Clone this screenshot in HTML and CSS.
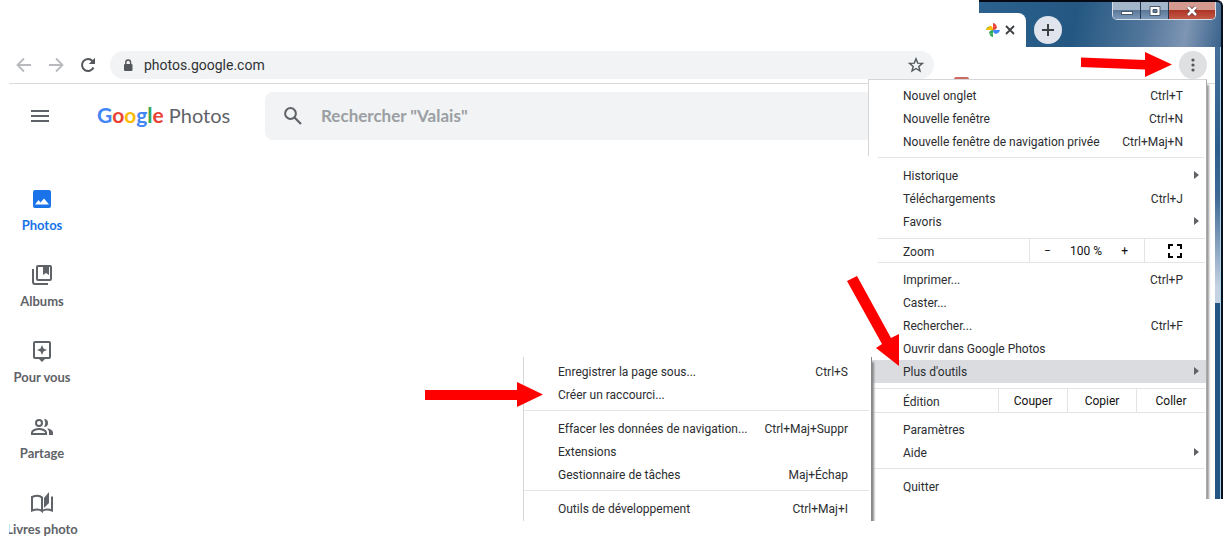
FILE: index.html
```html
<!DOCTYPE html>
<html lang="fr">
<head>
<meta charset="utf-8">
<title>Google Photos</title>
<link rel="stylesheet" href="styles.css">
</head>
<body>
<div class="window">
  <header class="titlebar">
    <div class="tab">
      <svg width="14" height="14" viewBox="0 0 14 14" aria-hidden="true"><path fill="#ea4335" d="M7 0c2.500.6 3.500 2 3.500 3.800H7z"/><path fill="#fbbc04" d="M3.500 2.800C5.500 2.800 7 4.500 7 7H3.500z"/><path fill="#34a853" d="M0 7c.6-2.500 2-3.500 3.500-3.500V7H7v7c-2.500-.6-3.500-2-3.500-3.500H7L7 7z"/><path fill="#fbbc04" d="M3.500 2.800C5.500 2.800 7 4.500 7 7H0c.6-2 1.800-3 3.500-3z"/><path fill="#ea4335" d="M11 3.500C11 5.500 9.500 7 7 7V3.500z"/><path fill="#4285f4" d="M14 7c-.6 2.500-2 3.500-3.800 3.500V7zM10.500 11C8.500 11 7 9.500 7 7h3.500z"/><path fill="#34a853" d="M3 10.500C3 8.500 4.500 7 7 7v3.500z"/></svg>
      <button class="tab-close" aria-label="Fermer l'onglet"><svg width="10" height="10" viewBox="0 0 10 10"><path d="M1 1l8 8M9 1L1 9" stroke="#3c4043" stroke-width="1.800"/></svg></button>
    </div>
    <button class="new-tab" aria-label="Nouvel onglet"><svg width="14" height="14" viewBox="0 0 14 14"><path d="M7 1v12M1 7h12" stroke="#3c4043" stroke-width="2"/></svg></button>
    <div class="controls">
      <button class="ctl" aria-label="Réduire"><svg width="14" height="10" viewBox="0 0 14 10"><rect x="1.500" y="5.500" width="11" height="3" fill="#fff" stroke="#4b5a6b"/></svg></button>
      <button class="ctl" aria-label="Agrandir"><svg width="14" height="10" viewBox="0 0 14 10"><path fill="#fff" stroke="#4b5a6b" fill-rule="evenodd" d="M2 .5h10v9H2zM5 3.500v3h4v-3z"/></svg></button>
      <button class="ctl ctl-close" aria-label="Fermer"><svg width="14" height="10" viewBox="0 0 14 10"><path d="M3 1l8 8M11 1L3 9" stroke="#5b3030" stroke-width="4"/><path d="M3 1l8 8M11 1L3 9" stroke="#fff" stroke-width="2.600"/></svg></button>
    </div>
  </header>
  <div class="frame">
    <div class="content">
      <div class="toolbar">
        <button class="nav-btn" aria-label="Précédent"><svg width="16" height="16" viewBox="0 0 16 16"><path d="M15 8H2M8 1.500L1.500 8 8 14.500" fill="none" stroke="#b8babd" stroke-width="1.800"/></svg></button>
        <button class="nav-btn" aria-label="Suivant"><svg width="16" height="16" viewBox="0 0 16 16"><path d="M1 8h13M8 1.500L14.500 8 8 14.500" fill="none" stroke="#b8babd" stroke-width="1.800"/></svg></button>
        <button class="nav-btn" aria-label="Actualiser"><svg width="16" height="16" viewBox="0 0 16 16"><path d="M13.500 10.500A6 6 0 1 1 12.500 4" fill="none" stroke="#54575b" stroke-width="2"/><path fill="#54575b" d="M15 .8V7H8.800z"/></svg></button>
        <div class="omnibox">
          <svg width="10" height="13" viewBox="0 0 10 13" aria-hidden="true"><rect x="1" y="5" width="8.500" height="7" rx="1" fill="#54575b"/><path d="M2.800 5.500V3.400a2.400 2.400 0 0 1 4.800 0v2.100" fill="none" stroke="#54575b" stroke-width="1.400"/></svg>
          <input class="url" type="text" value="photos.google.com" aria-label="Adresse">
          <button class="plain" aria-label="Ajouter aux favoris"><svg width="16" height="16" viewBox="0 0 16 16"><path d="M8 1.800l1.700 4.300 4.700.3-3.600 3 1.200 4.600L8 11.500 4 14l1.200-4.600-3.600-3 4.700-.3z" fill="none" stroke="#54575b" stroke-width="1.400"/></svg></button>
        </div>
        <span class="extension"></span>
        <button class="more" aria-label="Menu"><svg width="4" height="14" viewBox="0 0 4 14"><g fill="#54575b"><circle cx="2" cy="2" r="1.600"/><circle cx="2" cy="7" r="1.600"/><circle cx="2" cy="12" r="1.600"/></g></svg></button>
      </div>
      <div class="app-header">
        <button class="plain" aria-label="Menu principal"><svg width="18" height="12" viewBox="0 0 18 12"><path d="M0 1h18M0 6h18M0 11h18" stroke="#5f6368" stroke-width="2"/></svg></button>
        <a class="logo" href="#"><span class="google"><span class="b">G</span><span class="r">o</span><span class="y">o</span><span class="b">g</span><span class="g">l</span><span class="r">e</span></span> Photos</a>
        <label class="search">
          <svg width="18" height="18" viewBox="0 0 18 18" aria-hidden="true"><circle cx="6.500" cy="6.500" r="5.400" fill="none" stroke="#5f6368" stroke-width="2"/><path d="M10.500 10.500l6.500 6.500" stroke="#5f6368" stroke-width="2.200"/></svg>
          <input type="search" placeholder='Rechercher "Valais"' aria-label="Rechercher">
        </label>
      </div>
      <nav class="side">
        <ul>
          <li><a class="active" href="#"><svg width="24" height="24" viewBox="0 0 24 24"><path fill="#1a73e8" d="M21 19V5a2 2 0 0 0-2-2H5a2 2 0 0 0-2 2v14a2 2 0 0 0 2 2h14a2 2 0 0 0 2-2zM5 17.500l3.500-4.500 2 2.500L14 11.500l5 6z" fill-rule="evenodd"/></svg>Photos</a></li>
          <li><a href="#"><svg width="24" height="24" viewBox="0 0 24 24"><path fill="none" stroke="#5f6368" stroke-width="2" d="M3 6v13a2 2 0 0 0 2 2h13M8 3h12q1 0 1 1v12q0 1-1 1H8q-1 0-1-1V4q0-1 1-1z"/><path fill="#5f6368" d="M13 3h6v9l-3-2-3 2z"/></svg>Albums</a></li>
          <li><a href="#"><svg width="24" height="24" viewBox="0 0 24 24"><path fill="none" stroke="#5f6368" stroke-width="2" d="M5 3h14q1 0 1 1v14q0 1-1 1H5q-1 0-1-1V4q0-1 1-1z"/><path fill="#5f6368" d="M8 19h8l-4 4zM12 6l1.500 3.500L17 11l-3.500 1.500L12 16l-1.500-3.500L7 11l3.500-1.500z"/></svg>Pour vous</a></li>
          <li><a href="#"><svg width="24" height="24" viewBox="0 0 24 24"><g fill="none" stroke="#5f6368" stroke-width="2"><circle cx="9" cy="8" r="3"/><path d="M2 19v-1.500C2 15.500 6 14 9 14s7 1.500 7 3.500V19z"/></g><path fill="#5f6368" d="M14 4a4 4 0 1 1 0 8c1.700-2.500 1.700-5.500 0-8zM17 13.200c3 .5 6 2 6 4.300V20h-4v-2.500c0-1.800-.7-3.200-2-4.300z"/></svg>Partage</a></li>
          <li><a href="#"><svg width="24" height="24" viewBox="0 0 24 24"><path fill="none" stroke="#5f6368" stroke-width="2" d="M12 20c-2-1.700-6-2-10-.5V6c4-1.700 8-1.500 10 .5zM12 20c3-2 6-2 10-.5V5.500"/><path fill="#5f6368" d="M14 7l5-6v11l-5 5z"/></svg>Livres photo</a></li>
        </ul>
      </nav>
    </div>
    <div class="edge"></div>
  </div>

  <div class="menu main-menu" role="menu">
    <div class="first-group">
      <button class="item">Nouvel onglet<span>Ctrl+T</span></button>
      <button class="item">Nouvelle fenêtre<span>Ctrl+N</span></button>
      <button class="item">Nouvelle fenêtre de navigation privée<span>Ctrl+Maj+N</span></button>
    </div>
    <hr>
    <button class="item sub">Historique</button>
    <button class="item">Téléchargements<span>Ctrl+J</span></button>
    <button class="item sub">Favoris</button>
    <div class="strip strip-inset">
      <div class="strip-label">Zoom</div>
      <div class="zoom"><button class="plain" aria-label="Zoom arrière">−</button><span>100 %</span><button class="plain" aria-label="Zoom avant">+</button></div>
      <button class="full" aria-label="Plein écran"><svg width="14" height="14" viewBox="0 0 14 14"><path d="M1 5V1h4M9 1h4v4M13 9v4H9M5 13H1V9" fill="none" stroke="#000" stroke-width="2"/></svg></button>
    </div>
    <button class="item">Imprimer...<span>Ctrl+P</span></button>
    <button class="item">Caster...</button>
    <button class="item">Rechercher...<span>Ctrl+F</span></button>
    <button class="item">Ouvrir dans Google Photos</button>
    <button class="item sub selected">Plus d'outils</button>
    <div class="strip">
      <div class="strip-label">Édition</div>
      <button class="cell">Couper</button>
      <button class="cell">Copier</button>
      <button class="cell">Coller</button>
    </div>
    <button class="item">Paramètres</button>
    <button class="item sub">Aide</button>
    <hr>
    <button class="item">Quitter</button>
  </div>

  <div class="menu sub-menu" role="menu">
    <button class="item">Enregistrer la page sous...<span>Ctrl+S</span></button>
    <button class="item">Créer un raccourci...</button>
    <hr>
    <button class="item">Effacer les données de navigation...<span>Ctrl+Maj+Suppr</span></button>
    <button class="item">Extensions</button>
    <button class="item">Gestionnaire de tâches<span>Maj+Échap</span></button>
    <hr>
    <button class="item">Outils de développement<span>Ctrl+Maj+I</span></button>
  </div>

  <svg class="arrow arrow-top" width="92" height="28" viewBox="0 0 92 28" aria-hidden="true"><path fill="#f00" d="M0 5.500 64 8V0l27 12.500L64 25v-7.500L0 15z"/></svg>
  <svg class="arrow arrow-mid" width="54" height="92" viewBox="0 0 54 92" aria-hidden="true"><path fill="#f00" d="M0 5 10 0l34 62 8-4v32L29 72l6-4z"/></svg>
  <svg class="arrow arrow-low" width="119" height="26" viewBox="0 0 119 26" aria-hidden="true"><path fill="#f00" d="M0 8h92V0l26 12.500L92 25v-7H0z"/></svg>
</div>
</body>
</html>
```
FILE: styles.css
```css
* { box-sizing: border-box; }
body { margin: 0; background: #fff; color: #2b2d30; font: 12px/23px Roboto, sans-serif; }
button { margin: 0; padding: 0; border: 0; background: none; color: inherit; font: inherit; }
input { border: 0; padding: 0; background: none; min-width: 0; outline: 0; }
svg { display: block; flex: none; }

.window { position: relative; min-height: 554px; overflow: hidden; }

.titlebar {
  display: flex; align-items: flex-start; width: 244px; height: 47px; margin-left: auto;
  border-top: 2px solid #050a14; border-right: 2px solid #07101c; border-top-right-radius: 6px;
  background: linear-gradient(100deg, #2c618f 0%, #245882 40%, #52769b 68%, #7e95b3 85%, #3a638c 100%);
}
.tab { display: flex; align-items: center; gap: 5px; width: 47px; height: 34px; margin-top: 11px; padding-left: 7px; background: #fff; border-top-right-radius: 8px; }
.new-tab { display: grid; place-items: center; width: 28px; height: 28px; margin: 14px 0 0 8px; border-radius: 50%; background: #dfe4ed; }
.controls { display: flex; width: 104px; height: 18px; margin: 0 5px 0 auto; border: 1px solid #d4dfea; border-top: 0; border-radius: 0 0 5px 5px; overflow: hidden; }
.ctl { display: grid; place-items: center; width: 28px; border-right: 1px solid #24384f; background: linear-gradient(#a3b6ca 45%, #5b7898 50%, #7d9abb); }
.ctl-close { flex: 1; border-right: 0; background: linear-gradient(#d59a8f 45%, #ad3526 50%, #c45948); }

.frame { display: flex; align-items: flex-start; }
.content { flex: 1; min-width: 0; }
.edge {
  width: 8px; height: 452px; border-right: 2px solid #07101c;
  background: linear-gradient(#46709a 0, #2c5d8b 100px, #3d6994 150px, #c4d2e2 240px, #c4d2e2 256px, #245684 256px, #245684 100%);
  box-shadow: inset -1px 0 #a8d3ea;
}

.toolbar { display: flex; align-items: center; height: 37px; margin-left: 9px; padding: 0 8px 0 7px; border-bottom: 1px solid #d8dadd; }
.nav-btn { margin-right: 16px; }
.omnibox { display: flex; align-items: center; flex: 1; height: 28px; margin-left: -2px; padding: 0 10px 0 13px; border-radius: 14px; background: #f1f3f4; }
.url { flex: 1; margin-left: 11px; color: #303236; font: 14px/20px Roboto, sans-serif; }
.extension { align-self: flex-end; width: 15px; height: 6px; margin-left: 20px; border-radius: 2px; background: #cf6a62; }
.more { display: grid; place-items: center; width: 28px; height: 28px; margin-left: 210px; border-radius: 50%; background: #dfe0e1; }

.app-header { display: flex; align-items: center; height: 64px; padding: 0 108px 0 31px; }
.logo { width: 168px; margin-left: 48px; padding-bottom: 2px; color: #5f6368; font: 20px/28px Lato, sans-serif; text-decoration: none; white-space: nowrap; }
.google { font-size: 21px; font-weight: 700; }
.b { color: #4285f4; } .r { color: #ea4335; } .y { color: #fbbc04; } .g { color: #34a853; }
.search { display: flex; align-items: center; gap: 19px; flex: 1; height: 48px; padding: 0 19px; border-radius: 8px; background: #f1f3f4; }
.search input { flex: 1; font: 700 17px/24px Lato, sans-serif; }
.search input::placeholder { color: #9b9fa3; opacity: 1; }

.side { width: 91px; margin: 32px 0 0 9px; overflow: hidden; }
.side ul { width: 84px; margin: 0 0 0 -9px; padding: 0; list-style: none; }
.side a { display: flex; flex-direction: column; align-items: center; gap: 4px; height: 76px; padding-top: 7px; color: #5f6368; font: 700 13px/20px Lato, sans-serif; text-decoration: none; white-space: nowrap; }
.side .active { color: #1a73e8; }

.menu { position: absolute; background: #fff; }
.menu hr { height: 1px; margin: 4px 2px 6px 5px; border: 0; background: #e3e4e6; }
.main-menu { top: 79px; right: 16px; width: 339px; height: 420px; border-top: 1px solid #d5d6d8; border-right: 1px solid #aaa; box-shadow: 3px 5px 2px -1px #999; clip-path: inset(0 -6px 0 0); }
.first-group { padding: 4px 0 3px; border-left: 1px solid #d5d6d8; }
.item { display: flex; align-items: center; justify-content: space-between; width: 100%; height: 23px; padding: 2px 23px 0 35px; text-align: left; white-space: nowrap; }
.first-group .item, .sub-menu .item { padding-left: 34px; }
.first-group + hr { margin: 1px 2px 6px 10px; }
.sub { padding-right: 7px; }
.sub::after { content: ""; margin-bottom: 4px; border: solid transparent; border-width: 4px 0 4px 5px; border-left-color: #606266; }
.selected { background: #dadce0; }
.strip { display: flex; height: 25px; margin: 5px 1px 5px 4px; border: solid #e3e4e6; border-width: 1px 0; }
.strip-label { flex: 1; padding-left: 31px; line-height: 27px; }
.strip-inset { margin-left: 10px; }
.strip-inset .strip-label { padding-left: 25px; }
.zoom, .full, .cell { border-left: 1px solid #e3e4e6; }
.zoom { display: flex; justify-content: space-between; width: 115px; padding: 0 16px 0 14px; color: #111; line-height: 25px; }
.full { display: grid; place-items: center; width: 61px; }
.cell { width: 69px; color: #111; line-height: 25px; }
.sub-menu { top: 357px; right: 351px; width: 349px; padding: 3px 0 1px; border-left: 1px solid #d5d6d8; border-right: 1px solid #888; box-shadow: 3px 4px 2px -1px #888; clip-path: inset(0 -6px 0 0); }
.sub-menu hr { margin-left: 0; }

.arrow { position: absolute; }
.arrow-top { top: 52px; right: 50px; }
.arrow-mid { top: 276px; right: 322px; }
.arrow-low { top: 382px; right: 679px; }
```
